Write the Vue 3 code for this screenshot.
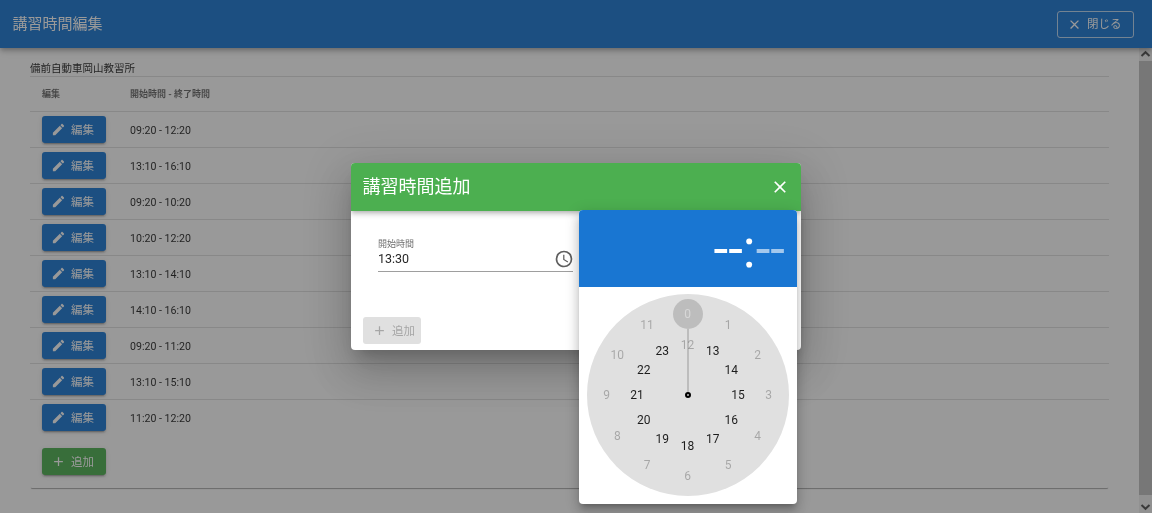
<script setup>
const slots = ['09:20 - 12:20', '13:10 - 16:10', '09:20 - 10:20', '10:20 - 12:20', '13:10 - 14:10', '14:10 - 16:10', '09:20 - 11:20', '13:10 - 15:10', '11:20 - 12:20']

const pencil = 'M20.71,7.04C21.1,6.65 21.1,6 20.71,5.63L18.37,3.29C18,2.9 17.35,2.9 16.96,3.29L15.12,5.12L18.87,8.87M3,17.25V21H6.75L17.81,9.93L14.06,6.18L3,17.25Z'
const plus = 'M19,13H13V19H11V13H5V11H11V5H13V11H19V13Z'
const close = 'M19,6.41L17.59,5L12,10.59L6.41,5L5,6.41L10.59,12L5,17.59L6.41,19L12,13.41L17.59,19L19,17.59L13.41,12L19,6.41Z'
const clock = 'M12,20A8,8 0 0,0 20,12A8,8 0 0,0 12,4A8,8 0 0,0 4,12A8,8 0 0,0 12,20M12,2A10,10 0 0,1 22,12A10,10 0 0,1 12,22C6.47,22 2,17.5 2,12A10,10 0 0,1 12,2M12.5,7V12.25L17,15L16.25,16.23L11,13V7H12.5Z'

// 文字盤の数字: 外周 0-11 / 内周 12-23
const hours = []
for (let h = 0; h < 24; h++) {
    const inner = h >= 12
    const r = inner ? 50.5 : 81
    const a = ((h % 12) * 30 * Math.PI) / 180
    hours.push({
        h,
        enabled: h >= 13,
        x: 100.5 + r * Math.sin(a),
        y: 101 - r * Math.cos(a)
    })
}
</script>

<template>
    <div class="page">
        <header class="topbar">
            <div class="topbar-title">講習時間編集</div>
            <button class="btn btn-outline">
                <svg class="icon" viewBox="0 0 24 24"><path :d="close" /></svg>
                <span>閉じる</span>
            </button>
        </header>
        <div class="body">
            <main class="main">
                <section class="card">
                    <div class="card-title">備前自動車岡山教習所</div>
                    <div class="row row-head">
                        <div class="col-edit">編集</div>
                        <div>開始時間 - 終了時間</div>
                    </div>
                    <div v-for="(slot, i) in slots" :key="i" class="row">
                        <div class="col-edit">
                            <button class="btn btn-blue">
                                <svg class="icon" viewBox="0 0 24 24"><path :d="pencil" /></svg>
                                <span>編集</span>
                            </button>
                        </div>
                        <div class="time">{{ slot }}</div>
                    </div>
                    <div class="card-foot">
                        <button class="btn btn-green">
                            <svg class="icon" viewBox="0 0 24 24"><path :d="plus" /></svg>
                            <span>追加</span>
                        </button>
                    </div>
                </section>
            </main>
            <div class="scrollbar">
                <svg class="arrow" viewBox="0 0 13 13"><path d="M2.5 8 6.5 4.2 10.5 8" /></svg>
                <div class="thumb"></div>
                <svg class="arrow" viewBox="0 0 13 13"><path d="M2.5 5 6.5 8.8 10.5 5" /></svg>
            </div>
        </div>

        <div class="overlay">
            <div class="dialog">
                <div class="dialog-head">
                    <div class="dialog-title">講習時間追加</div>
                    <svg class="dialog-close" viewBox="0 0 24 24"><path :d="close" /></svg>
                </div>
                <div class="dialog-body">
                    <div class="field">
                        <div class="field-label">開始時間</div>
                        <div class="field-input">
                            <span>13:30</span>
                            <svg class="field-icon" viewBox="0 0 24 24"><path :d="clock" /></svg>
                        </div>
                    </div>
                    <button class="btn btn-disabled">
                        <svg class="icon" viewBox="0 0 24 24"><path :d="plus" /></svg>
                        <span>追加</span>
                    </button>
                </div>
            </div>

            <div class="picker">
                <div class="picker-title">
                    <span>--</span><span>:</span><span class="faded">--</span>
                </div>
                <div class="picker-body">
                    <div class="face">
                        <div class="hand"></div>
                        <div class="hand-top"></div>
                        <div class="hand-dot"></div>
                        <span
                            v-for="n in hours"
                            :key="n.h"
                            class="hour"
                            :class="{ on: n.enabled, active: n.h === 0 }"
                            :style="{ left: n.x + 'px', top: n.y + 'px' }"
                        >{{ n.h }}</span>
                    </div>
                </div>
            </div>
        </div>
    </div>
</template>

<style>
html,
body {
    margin: 0;
    overflow: hidden;
    background: #fff;
}
</style>

<style scoped>
.page {
    position: relative;
    width: 1152px;
    height: 513px;
    overflow: hidden;
    display: flex;
    flex-direction: column;
    font-family: Roboto, "Noto Sans CJK JP", sans-serif;
    color: rgba(0, 0, 0, 0.87);
    will-change: transform;
}

.topbar {
    height: 48px;
    flex: none;
    display: flex;
    align-items: center;
    justify-content: space-between;
    padding: 0 18px 0 12.5px;
    box-sizing: border-box;
    background: #1976d2;
    color: #fff;
    box-shadow: 0 2px 4px -1px rgba(0, 0, 0, 0.2), 0 4px 5px 0 rgba(0, 0, 0, 0.14), 0 1px 10px 0 rgba(0, 0, 0, 0.12);
    position: relative;
    z-index: 1;
}

.topbar-title {
    font-size: 15px;
    padding-bottom: 4px;
}

.body {
    flex: 1;
    display: flex;
    min-height: 0;
}

.main {
    flex: 1;
    padding: 12px 30px 0;
    min-width: 0;
}

.card {
    border-radius: 2px;
    box-shadow: 0 2px 1px -1px rgba(0, 0, 0, 0.35);
    padding-bottom: 13px;
}

.card-title {
    height: 15px;
    padding-top: 1px;
    line-height: 16px;
    font-size: 10.5px;
    border-bottom: 1px solid rgba(0, 0, 0, 0.12);
}

.row {
    display: flex;
    align-items: center;
    height: 36px;
    box-sizing: border-box;
    padding: 0 12px;
    border-bottom: 1px solid rgba(0, 0, 0, 0.12);
}

.row:nth-last-child(2) {
    border-bottom-color: transparent;
}

.row-head {
    height: 35px;
    padding-bottom: 2px;
    font-size: 9px;
    font-weight: 700;
    color: rgba(0, 0, 0, 0.6);
}

.col-edit {
    width: 88px;
    flex: none;
}

.time {
    font-size: 10.6px;
    padding-top: 2px;
}

.card-foot {
    padding: 12px 12px 0;
}

.btn {
    display: inline-flex;
    align-items: center;
    justify-content: flex-start;
    gap: 5.5px;
    height: 27px;
    width: 64px;
    padding: 0 0 0 8.5px;
    box-sizing: border-box;
    border: 0;
    border-radius: 3px;
    font: inherit;
    font-size: 11.5px;
    color: #fff;
    box-shadow: 0 3px 1px -2px rgba(0, 0, 0, 0.2), 0 2px 2px 0 rgba(0, 0, 0, 0.14), 0 1px 5px 0 rgba(0, 0, 0, 0.12);
}

.btn span {
    margin-top: -2px;
}

.icon {
    width: 15px;
    height: 15px;
    fill: currentColor;
}

.btn-blue {
    background: #1976d2;
}

.btn-green {
    background: #4caf50;
}

.btn-outline {
    width: 77px;
    background: transparent;
    border: 1px solid rgba(255, 255, 255, 0.7);
    box-shadow: none;
}

.btn-disabled {
    width: 58px;
    background: #e0e0e0;
    color: #a6a6a6;
    box-shadow: none;
}

.scrollbar {
    width: 13px;
    flex: none;
    display: flex;
    flex-direction: column;
    background: #f1f1f1;
}

.arrow {
    width: 13px;
    height: 13px;
    flex: none;
    fill: none;
    stroke: #505050;
    stroke-width: 2;
}

.thumb {
    flex: 1;
    margin-bottom: 5px;
    background: #c1c1c1;
}

.overlay {
    position: absolute;
    inset: 0;
    z-index: 5;
    display: flex;
    align-items: center;
    justify-content: center;
    background: rgba(33, 33, 33, 0.46);
    will-change: transform;
}

.dialog {
    width: 450px;
    height: 187px;
    display: flex;
    flex-direction: column;
    border-radius: 4px;
    overflow: hidden;
    background: #fff;
    box-shadow: 0 11px 15px -7px rgba(0, 0, 0, 0.2), 0 24px 38px 3px rgba(0, 0, 0, 0.14), 0 9px 46px 8px rgba(0, 0, 0, 0.12);
}

.dialog-head {
    height: 48px;
    flex: none;
    display: flex;
    align-items: center;
    justify-content: space-between;
    padding: 0 12px;
    background: #4caf50;
    color: #fff;
    box-shadow: 0 2px 4px -1px rgba(0, 0, 0, 0.2), 0 4px 5px 0 rgba(0, 0, 0, 0.14);
    position: relative;
}

.dialog-title {
    font-size: 18px;
    margin-left: -0.5px;
    padding-bottom: 5px;
}

.dialog-close {
    width: 20px;
    height: 20px;
    margin-right: -1px;
    fill: #fff;
}

.dialog-body {
    flex: 1;
    display: flex;
    flex-direction: column;
    justify-content: space-between;
    padding: 27px 12px 6px;
}

.field {
    width: 195px;
    margin-left: 15px;
    border-bottom: 1px solid #9e9e9e;
}

.field-label {
    font-size: 9px;
    line-height: 12px;
    color: rgba(0, 0, 0, 0.6);
}

.field-input {
    display: flex;
    align-items: center;
    justify-content: space-between;
    height: 21px;
    padding-bottom: 4px;
    box-sizing: border-box;
    font-size: 12.5px;
}

.field-icon {
    width: 20px;
    height: 20px;
    margin-right: -1px;
    flex: none;
    fill: #5f5f5f;
}

.picker {
    position: absolute;
    left: 579px;
    top: 210px;
    width: 218px;
    border-radius: 4px;
    overflow: hidden;
    background: #fff;
    box-shadow: 0 5px 5px -3px rgba(0, 0, 0, 0.2), 0 8px 10px 1px rgba(0, 0, 0, 0.14), 0 3px 14px 2px rgba(0, 0, 0, 0.12);
}

.picker-title {
    height: 77px;
    box-sizing: border-box;
    padding: 1px 12px 0 0;
    display: flex;
    align-items: center;
    justify-content: flex-end;
    background: #1976d2;
    color: #fff;
    font-size: 53px;
    line-height: 1;
}

.faded {
    opacity: 0.6;
}

.picker-body {
    padding: 7px 8px 8px;
}

.face {
    position: relative;
    width: 202px;
    height: 202px;
    border-radius: 50%;
    background: #e0e0e0;
}

.hand {
    position: absolute;
    left: 100px;
    top: 35px;
    width: 2px;
    height: 66px;
    background: #bdbdbd;
}

.hand-top {
    position: absolute;
    left: 85.5px;
    top: 5px;
    width: 30px;
    height: 30px;
    border-radius: 50%;
    background: #bdbdbd;
}

.hand-dot {
    position: absolute;
    left: 98px;
    top: 98px;
    width: 2px;
    height: 2px;
    border: 2px solid #000;
    border-radius: 50%;
    background: #bdbdbd;
}

.hour {
    position: absolute;
    transform: translate(-50%, -50%);
    font-size: 12px;
    line-height: 14px;
    color: rgba(0, 0, 0, 0.26);
}

.hour.on {
    color: rgba(0, 0, 0, 0.87);
}

.hour.active {
    color: rgba(255, 255, 255, 0.4);
}
</style>
